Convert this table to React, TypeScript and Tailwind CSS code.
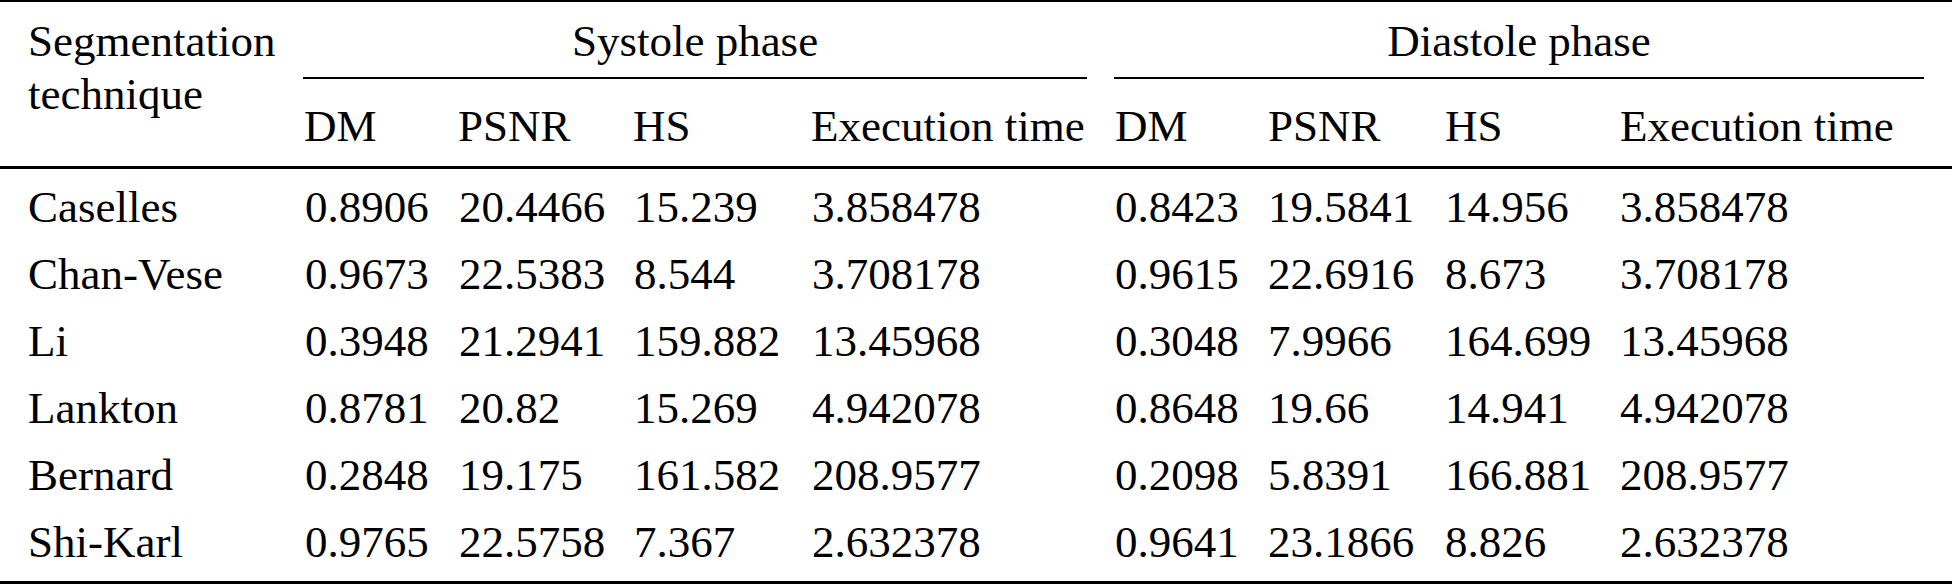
import React from 'react';

interface Row {
  name: string;
  systole: string[];
  diastole: string[];
}

const rows: Row[] = [
  { name: 'Caselles', systole: ['0.8906', '20.4466', '15.239', '3.858478'], diastole: ['0.8423', '19.5841', '14.956', '3.858478'] },
  { name: 'Chan-Vese', systole: ['0.9673', '22.5383', '8.544', '3.708178'], diastole: ['0.9615', '22.6916', '8.673', '3.708178'] },
  { name: 'Li', systole: ['0.3948', '21.2941', '159.882', '13.45968'], diastole: ['0.3048', '7.9966', '164.699', '13.45968'] },
  { name: 'Lankton', systole: ['0.8781', '20.82', '15.269', '4.942078'], diastole: ['0.8648', '19.66', '14.941', '4.942078'] },
  { name: 'Bernard', systole: ['0.2848', '19.175', '161.582', '208.9577'], diastole: ['0.2098', '5.8391', '166.881', '208.9577'] },
  { name: 'Shi-Karl', systole: ['0.9765', '22.5758', '7.367', '2.632378'], diastole: ['0.9641', '23.1866', '8.826', '2.632378'] },
];

const metrics = ['DM', 'PSNR', 'HS', 'Execution time'];

const cols = 'grid grid-cols-[304px_154px_175px_178px_304px_153px_177px_175px_1fr]';

export default function App() {
  return (
    <div className="w-[1952px] h-[586px] bg-white text-black text-[45px] font-['Liberation_Serif','Times_New_Roman',serif] border-t-2 border-black">
      {/* header */}
      <div className={`${cols} grid-rows-[77px_87px] border-b-[3px] border-black`}>
        <div className="row-span-2 pl-[28px] pt-[13px] leading-[53px]">
          Segmentation
          <br />
          technique
        </div>
        <div className="col-span-4 mr-[28px] -ml-px pt-[13px] leading-[53px] text-center border-b-2 border-black">
          Systole phase
        </div>
        <div className="col-span-4 mr-[28px] -ml-px pt-[13px] leading-[53px] text-center border-b-2 border-black">
          Diastole phase
        </div>
        {[...metrics, ...metrics].map((m, i) => (
          <div key={i} className="pt-[21px] leading-[53px] whitespace-nowrap">
            {m}
          </div>
        ))}
      </div>

      {/* body */}
      <div className="pt-[5px] pb-[5px] border-b-[3px] border-black">
        {rows.map((row) => (
          <div key={row.name} className={`${cols} leading-[67px] whitespace-nowrap`}>
            <div className="pl-[28px]">{row.name}</div>
            {row.systole.map((v, i) => (
              <div key={`s${i}`} className="pl-px">{v}</div>
            ))}
            {row.diastole.map((v, i) => (
              <div key={`d${i}`}>{v}</div>
            ))}
          </div>
        ))}
      </div>
    </div>
  );
}
